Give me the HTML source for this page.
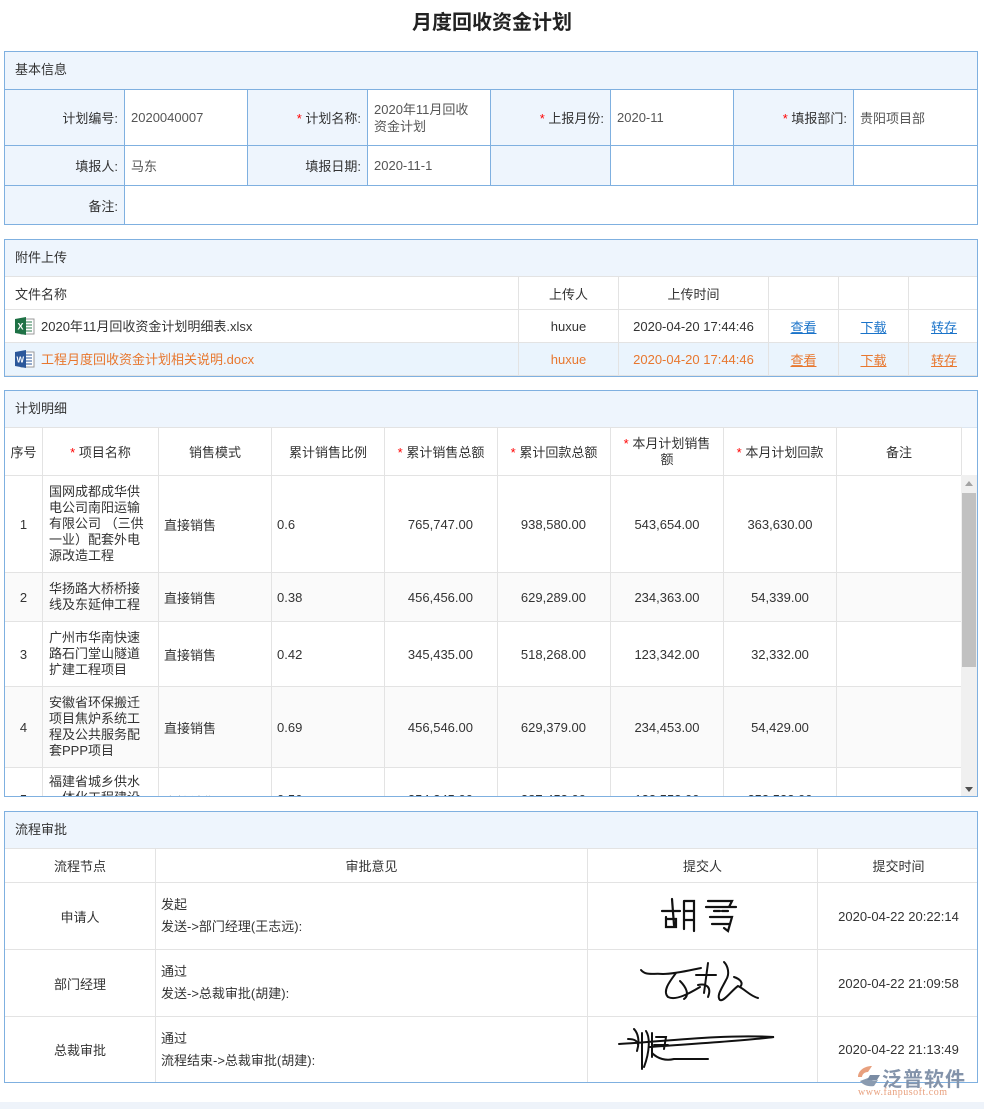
<!DOCTYPE html>
<html><head><meta charset="utf-8"><style>
*{box-sizing:border-box;margin:0;padding:0}
body{width:984px;height:1109px;background:#fff;font-family:"Liberation Sans","Noto Sans CJK SC",sans-serif;font-size:13px;color:#333;position:relative;overflow:hidden}
.title{position:absolute;top:6px;left:0;width:984px;text-align:center;font-size:20px;font-weight:bold;color:#222}
.sec{position:absolute;left:4px;width:974px;border:1px solid #7fb0e0;overflow:hidden}
.hd{height:37px;background:#eef5fd;border-bottom:1px solid #dde6f0;line-height:36px;padding-left:10px;color:#333}
table{border-collapse:collapse;table-layout:fixed}
td{overflow:hidden}
.g td{border:1px solid #e3e3e3}
.s{color:#f00}
.c{text-align:center}
.r{text-align:right}
a{color:#1a73c9;text-decoration:underline}
</style></head><body>
<div class="title">月度回收资金计划</div>

<div class="sec" style="top:51px;height:174px">
<div class="hd" style="border-bottom:none">基本信息</div>
<table style="width:974px;margin-left:-1px;margin-top:0">
<colgroup><col style="width:120px"><col style="width:123px"><col style="width:120px"><col style="width:123px"><col style="width:120px"><col style="width:123px"><col style="width:120px"><col style="width:125px"></colgroup>
<tr style="height:56px">
<td style="border:1px solid #7fb0e0;background:#eef5fd;text-align:right;padding-right:6px">计划编号:</td>
<td style="border:1px solid #7fb0e0;padding-left:6px;color:#555">2020040007</td>
<td style="border:1px solid #7fb0e0;background:#eef5fd;text-align:right;padding-right:6px"><span class="s">*</span> 计划名称:</td>
<td style="border:1px solid #7fb0e0;padding-left:6px;color:#555;line-height:17px">2020年11月回收<br>资金计划</td>
<td style="border:1px solid #7fb0e0;background:#eef5fd;text-align:right;padding-right:6px"><span class="s">*</span> 上报月份:</td>
<td style="border:1px solid #7fb0e0;padding-left:6px;color:#555">2020-11</td>
<td style="border:1px solid #7fb0e0;background:#eef5fd;text-align:right;padding-right:6px"><span class="s">*</span> 填报部门:</td>
<td style="border:1px solid #7fb0e0;padding-left:6px;color:#555">贵阳项目部</td></tr>
<tr style="height:40px">
<td style="border:1px solid #7fb0e0;background:#eef5fd;text-align:right;padding-right:6px">填报人:</td>
<td style="border:1px solid #7fb0e0;padding-left:6px;color:#555">马东</td>
<td style="border:1px solid #7fb0e0;background:#eef5fd;text-align:right;padding-right:6px">填报日期:</td>
<td style="border:1px solid #7fb0e0;padding-left:6px;color:#555">2020-11-1</td>
<td style="border:1px solid #7fb0e0;background:#eef5fd"></td>
<td style="border:1px solid #7fb0e0"></td>
<td style="border:1px solid #7fb0e0;background:#eef5fd"></td>
<td style="border:1px solid #7fb0e0"></td></tr>
<tr style="height:40px">
<td style="border:1px solid #7fb0e0;background:#eef5fd;text-align:right;padding-right:6px">备注:</td>
<td colspan="7" style="border:1px solid #7fb0e0"></td></tr>
</table></div>

<div class="sec" style="top:239px;height:138px">
<div class="hd">附件上传</div>
<table class="g" style="width:975px;margin-left:-1px;margin-top:-1px">
<colgroup><col style="width:514px"><col style="width:100px"><col style="width:150px"><col style="width:70px"><col style="width:70px"><col style="width:71px"></colgroup>
<tr style="height:33px"><td style="padding-left:10px">文件名称</td><td class="c">上传人</td><td class="c">上传时间</td><td></td><td></td><td></td></tr>
<tr style="height:33px"><td style="padding-left:10px"><svg width="20" height="20" viewBox="0 0 20 20" style="vertical-align:-5px;margin-right:6px"><rect x="6" y="3" width="13" height="15" fill="#fff" stroke="#999"/><path d="M10 6h7M10 9h7M10 12h7M10 15h7" stroke="#2e7d4f"/><path d="M0 3l11-2v18L0 17z" fill="#1e7145"/><text x="2.5" y="13.5" font-size="9" fill="#fff" font-family="Liberation Sans" font-weight="bold">X</text></svg>2020年11月回收资金计划明细表.xlsx</td><td class="c">huxue</td><td class="c">2020-04-20 17:44:46</td><td class="c"><a>查看</a></td><td class="c"><a>下载</a></td><td class="c"><a>转存</a></td></tr>
<tr style="height:33px;background:#eaf4fd;color:#e8772e"><td style="padding-left:10px"><svg width="20" height="20" viewBox="0 0 20 20" style="vertical-align:-5px;margin-right:6px"><rect x="6" y="3" width="13" height="15" fill="#fff" stroke="#999"/><path d="M10 6h7M10 9h7M10 12h7M10 15h7" stroke="#2b579a"/><path d="M0 3l11-2v18L0 17z" fill="#2b579a"/><text x="1.5" y="13.5" font-size="8" fill="#fff" font-family="Liberation Sans" font-weight="bold">W</text></svg>工程月度回收资金计划相关说明.docx</td><td class="c">huxue</td><td class="c">2020-04-20 17:44:46</td><td class="c"><a style="color:#e8772e">查看</a></td><td class="c"><a style="color:#e8772e">下载</a></td><td class="c"><a style="color:#e8772e">转存</a></td></tr>
</table></div>

<div class="sec" style="top:390px;height:407px">
<div class="hd">计划明细</div>
<table class="g" style="width:957px;margin-left:-1px;margin-top:-1px">
<colgroup><col style="width:38px"><col style="width:116px"><col style="width:113px"><col style="width:113px"><col style="width:113px"><col style="width:113px"><col style="width:113px"><col style="width:113px"><col style="width:125px"></colgroup>
<tr style="height:48px" class="c"><td>序号</td><td><span class="s">*</span> 项目名称</td><td>销售模式</td><td>累计销售比例</td><td><span class="s">*</span> 累计销售总额</td><td><span class="s">*</span> 累计回款总额</td><td style="line-height:16px"><span class="s">*</span> 本月计划销售<br>额</td><td><span class="s">*</span> 本月计划回款</td><td>备注</td></tr>
<tr style="height:97px"><td class="c">1</td><td style="padding:0 6px;line-height:16px">国网成都成华供电公司南阳运输有限公司 （三供一业）配套外电源改造工程</td><td style="padding-left:5px">直接销售</td><td style="padding-left:5px">0.6</td><td class="r" style="padding-right:24px">765,747.00</td><td class="r" style="padding-right:24px">938,580.00</td><td class="c">543,654.00</td><td class="c">363,630.00</td><td></td></tr>
<tr style="height:49px;background:#fafafa"><td class="c">2</td><td style="padding:0 6px;line-height:16px">华扬路大桥桥接线及东延伸工程</td><td style="padding-left:5px">直接销售</td><td style="padding-left:5px">0.38</td><td class="r" style="padding-right:24px">456,456.00</td><td class="r" style="padding-right:24px">629,289.00</td><td class="c">234,363.00</td><td class="c">54,339.00</td><td></td></tr>
<tr style="height:65px"><td class="c">3</td><td style="padding:0 6px;line-height:16px">广州市华南快速路石门堂山隧道扩建工程项目</td><td style="padding-left:5px">直接销售</td><td style="padding-left:5px">0.42</td><td class="r" style="padding-right:24px">345,435.00</td><td class="r" style="padding-right:24px">518,268.00</td><td class="c">123,342.00</td><td class="c">32,332.00</td><td></td></tr>
<tr style="height:81px;background:#fafafa"><td class="c">4</td><td style="padding:0 6px;line-height:16px">安徽省环保搬迁项目焦炉系统工程及公共服务配套PPP项目</td><td style="padding-left:5px">直接销售</td><td style="padding-left:5px">0.69</td><td class="r" style="padding-right:24px">456,546.00</td><td class="r" style="padding-right:24px">629,379.00</td><td class="c">234,453.00</td><td class="c">54,429.00</td><td></td></tr>
<tr style="height:81px"><td class="c" style="vertical-align:top;padding-top:24px">5</td><td style="padding:6px 6px 0;line-height:16px;vertical-align:top">福建省城乡供水一体化工程建设项目</td><td style="padding:24px 5px 0;vertical-align:top">直接销售</td><td style="padding:24px 5px 0;vertical-align:top">0.56</td><td class="r" style="padding:24px 24px 0 0;vertical-align:top">354,345.00</td><td class="r" style="padding:24px 24px 0 0;vertical-align:top">387,453.00</td><td class="c" style="padding-top:24px;vertical-align:top">123,553.00</td><td class="c" style="padding-top:24px;vertical-align:top">253,532.00</td><td></td></tr>
</table>
<div style="position:absolute;left:956px;top:84px;width:17px;height:322px;background:#f0f0f0">
<div style="position:absolute;left:4px;top:6px;border:4px solid transparent;border-bottom:5px solid #a3a3a3;border-top:none"></div>
<div style="position:absolute;left:1px;top:18px;width:14px;height:174px;background:#c1c1c1"></div>
<div style="position:absolute;left:4px;bottom:5px;border:4px solid transparent;border-top:5px solid #505050;border-bottom:none"></div>
</div>
</div>

<div class="sec" style="top:811px;height:272px">
<div class="hd">流程审批</div>
<table class="g" style="width:975px;margin-left:-1px;margin-top:-1px">
<colgroup><col style="width:151px"><col style="width:432px"><col style="width:230px"><col style="width:162px"></colgroup>
<tr style="height:34px" class="c"><td>流程节点</td><td>审批意见</td><td>提交人</td><td>提交时间</td></tr>
<tr style="height:67px"><td class="c">申请人</td><td style="padding-left:5px;line-height:22px">发起<br>发送-&gt;部门经理(王志远):</td><td class="c"><svg width="90" height="44" viewBox="0 0 90 44" fill="none" stroke="#111" stroke-width="2.2" stroke-linecap="round"><path d="M14 6l2 26M4 18h18M8 24v10h10v-8H9M26 8v28M26 8h10v30M26 18h10M26 27h10"/><path d="M50 8h24l-3 6M48 14h30M56 18h6M64 18h6M52 24h22l-4 14-4-3M54 31h18"/></svg></td><td class="c">2020-04-22 20:22:14</td></tr>
<tr style="height:67px"><td class="c">部门经理</td><td style="padding-left:5px;line-height:22px">通过<br>发送-&gt;总裁审批(胡建):</td><td class="c"><svg width="130" height="50" viewBox="0 0 130 50" fill="none" stroke="#111" stroke-width="2" stroke-linecap="round"><path d="M3 13c5 6 12 3 22 4 12 0 28-4 38-6M38 16c-6 8-14 18-8 24 8 4 22-4 32-10M42 24c6 6 10 14 4 18M70 6l-4 30M58 18h20M60 28c8-2 14 2 10 12M86 5c4 4 6 12 2 18-4 8-10 16-6 20 4 2 12-10 18-14 8 4 12 10 20 12M96 20c6 2 10 6 6 10"/></svg></td><td class="c">2020-04-22 21:09:58</td></tr>
<tr style="height:66px"><td class="c">总裁审批</td><td style="padding-left:5px;line-height:22px">通过<br>流程结束-&gt;总裁审批(胡建):</td><td class="c"><svg width="170" height="50" viewBox="0 0 170 50" fill="none" stroke="#111" stroke-width="2" stroke-linecap="round"><path d="M1 21c40-2 100-10 155-7-30 4-100 8-124 10M16 6c4 4 6 12 3 22M10 16c6 0 10 2 10 6M24 10v36M28 8c4 6 4 20-2 36M34 10v24M38 14h10l-2 12M36 22h14M34 30c6 6 14 8 22 6h34"/></svg></td><td class="c">2020-04-22 21:13:49</td></tr>
</table></div>

<div style="position:absolute;left:856px;top:1063px;width:120px;height:40px">
<svg width="26" height="24" viewBox="0 0 26 24" style="position:absolute;left:0;top:2px"><path d="M2 12c0-6 6-11 14-11l-4 6c-4 0-6 3-6 5z" fill="#e8a07e"/><path d="M4 16c3 4 8 6 14 5l4-6c-4 1-8 0-10-2z" fill="#8a9bb0"/><path d="M14 10h10l-3 5H11z" fill="#7a8ca4"/></svg>
<div style="position:absolute;left:26px;top:0;font-size:20px;font-weight:bold;color:#8393aa;letter-spacing:1px;white-space:nowrap">泛普软件</div>
<div style="position:absolute;left:2px;top:24px;font-size:10px;color:#e8a07e;font-family:'Liberation Serif',serif;white-space:nowrap;letter-spacing:0.5px">www.fanpusoft.com</div>
</div>
<div style="position:absolute;left:0;top:1102px;width:984px;height:7px;background:#eef3fa"></div>
</body></html>
